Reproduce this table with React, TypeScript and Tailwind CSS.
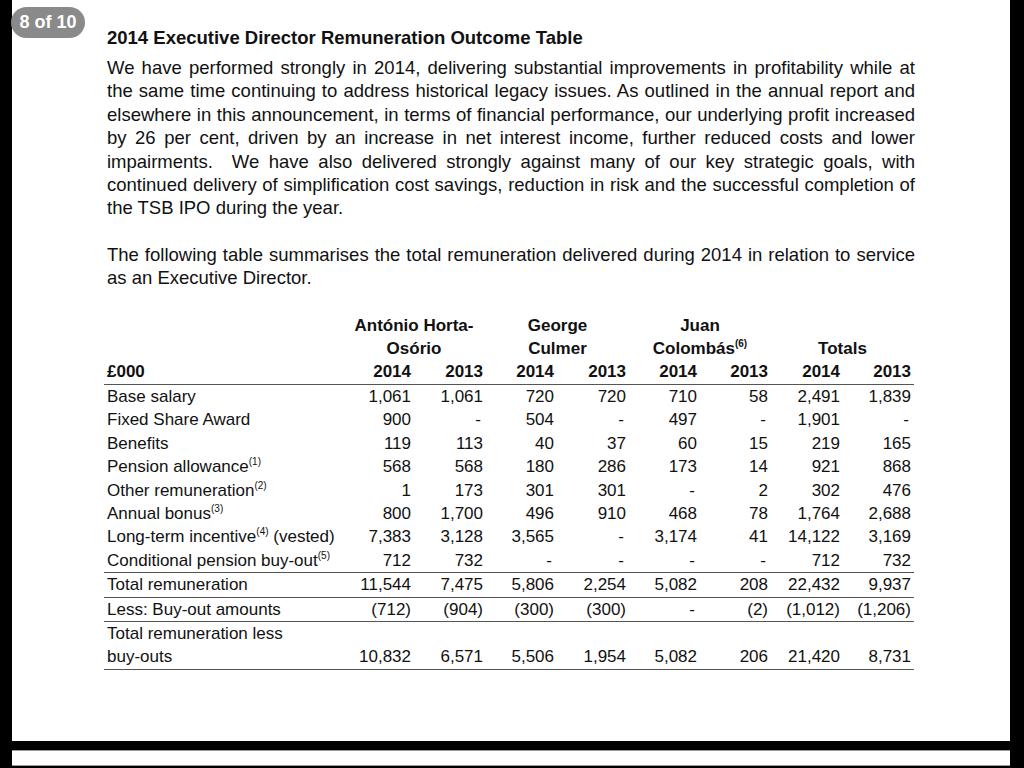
const grid = 'grid grid-cols-[238px_72px_72px_71px_72px_71px_71px_72px_71px] leading-[23.4px]'

type Row = {
  label: React.ReactNode
  values: string[]
  border?: boolean
}

function Sup({ n }: { n: number }) {
  return <sup className="text-[10px] -top-[7px]">({n})</sup>
}

const para1 = [
  'We have performed strongly in 2014, delivering substantial improvements in profitability while at',
  'the same time continuing to address historical legacy issues. As outlined in the annual report and',
  'elsewhere in this announcement, in terms of financial performance, our underlying profit increased',
  'by 26 per cent, driven by an increase in net interest income, further reduced costs and lower',
  'impairments.\u00a0 We have also delivered strongly against many of our key strategic goals, with',
  'continued delivery of simplification cost savings, reduction in risk and the successful completion of',
]

const rows: Row[] = [
  { label: 'Base salary', values: ['1,061', '1,061', '720', '720', '710', '58', '2,491', '1,839'] },
  { label: 'Fixed Share Award', values: ['900', '-', '504', '-', '497', '-', '1,901', '-'] },
  { label: 'Benefits', values: ['119', '113', '40', '37', '60', '15', '219', '165'] },
  { label: <>Pension allowance<Sup n={1} /></>, values: ['568', '568', '180', '286', '173', '14', '921', '868'] },
  { label: <>Other remuneration<Sup n={2} /></>, values: ['1', '173', '301', '301', '-', '2', '302', '476'] },
  { label: <>Annual bonus<Sup n={3} /></>, values: ['800', '1,700', '496', '910', '468', '78', '1,764', '2,688'] },
  {
    label: <>Long-term incentive<Sup n={4} /> (vested)</>,
    values: ['7,383', '3,128', '3,565', '-', '3,174', '41', '14,122', '3,169'],
  },
  {
    label: <>Conditional pension buy-out<Sup n={5} /></>,
    values: ['712', '732', '-', '-', '-', '-', '712', '732'],
    border: true,
  },
  {
    label: 'Total remuneration',
    values: ['11,544', '7,475', '5,806', '2,254', '5,082', '208', '22,432', '9,937'],
    border: true,
  },
  {
    label: 'Less: Buy-out amounts',
    values: ['(712)', '(904)', '(300)', '(300)', '-', '(2)', '(1,012)', '(1,206)'],
    border: true,
  },
  {
    label: <>Total remuneration less<br />buy-outs</>,
    values: ['10,832', '6,571', '5,506', '1,954', '5,082', '206', '21,420', '8,731'],
    border: true,
  },
]

export default function App() {
  return (
    <div className="relative h-[768px] w-[1024px] overflow-hidden bg-black font-['Liberation_Sans',Arial,sans-serif] text-[#111]">
      {/* page counter pill */}
      <div className="absolute left-[11px] top-[7px] z-10 flex h-[31px] w-[74px] items-center justify-center rounded-full bg-[#8a8a8a] text-[18px] font-bold text-white">
        8 of 10
      </div>

      <div className="ml-[12px] h-[741px] w-[998px] bg-white pl-[95px] pt-[26px]">
        <h1 className="text-[18.5px] font-bold leading-[24px]">2014 Executive Director Remuneration Outcome Table</h1>

        <div className="mt-[6px] w-[808px] text-[18.5px] leading-[23.4px]">
          {para1.map((line) => (
            <div key={line} className="text-justify [text-align-last:justify]">
              {line}
            </div>
          ))}
          <div>the TSB IPO during the year.</div>
        </div>

        <div className="mt-[23px] w-[808px] text-[18.5px] leading-[23.4px]">
          <div className="text-justify [text-align-last:justify]">
            The following table summarises the total remuneration delivered during 2014 in relation to service
          </div>
          <div>as an Executive Director.</div>
        </div>

        {/* remuneration table */}
        <div className="-ml-[3px] mt-[24px] w-[810px] text-[17px]">
          <div className={`${grid} font-bold`}>
            <div />
            <div className="col-span-2 text-center">António Horta-</div>
            <div className="col-span-2 text-center">George</div>
            <div className="col-span-2 text-center">Juan</div>
            <div className="col-span-2" />
          </div>
          <div className={`${grid} font-bold`}>
            <div />
            <div className="col-span-2 text-center">Osório</div>
            <div className="col-span-2 text-center">Culmer</div>
            <div className="col-span-2 text-center">
              Colombás<sup className="text-[10px] -top-[7px]">(6)</sup>
            </div>
            <div className="col-span-2 text-center">Totals</div>
          </div>
          <div className={`${grid} border-b border-[#555] font-bold`}>
            <div className="px-[3px]">£000</div>
            {['2014', '2013', '2014', '2013', '2014', '2013', '2014', '2013'].map((y, i) => (
              <div key={i} className="pr-[3px] text-right">
                {y}
              </div>
            ))}
          </div>

          {rows.map((row, i) => (
            <div key={i} className={`${grid} items-end ${row.border ? 'border-b border-[#555]' : ''}`}>
              <div className="whitespace-nowrap px-[3px]">{row.label}</div>
              {row.values.map((v, j) => (
                <div key={j} className={`text-right ${v === '-' ? 'pr-[5px]' : 'pr-[3px]'}`}>
                  {v}
                </div>
              ))}
            </div>
          ))}
        </div>
      </div>

      <div className="mt-[9px] ml-[12px] h-[16px] w-[998px] border-y border-[#9a9a9a] bg-white" />
    </div>
  )
}
